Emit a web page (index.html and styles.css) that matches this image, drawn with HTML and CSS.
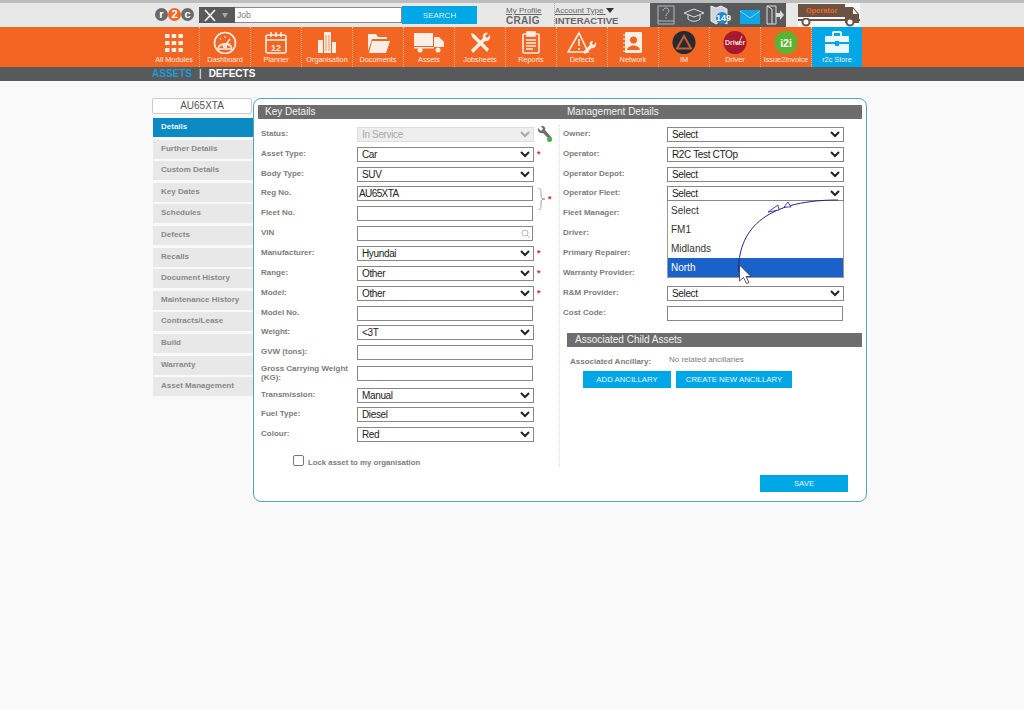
FILE: index.html
```html
<!DOCTYPE html>
<html lang="en">
<head>
  <meta charset="UTF-8">
  <title>r2c - Asset Details</title>
  <link rel="stylesheet" href="styles.css">
</head>
<body>
  <div class="topbar">
    <div class="logo"><span class="ball">r</span><span class="ball ball-mid">2</span><span class="ball">c</span></div>
    <div class="tool-box">
      <svg width="14" height="13" viewBox="0 0 14 13" fill="none" stroke="#eee" stroke-width="1.800"><path d="M2 1l10 11M12 1L2 12"/></svg>
      <span class="caret"></span>
    </div>
    <input class="job-input" type="text" placeholder="Job">
    <button class="search-btn">SEARCH</button>
    <div class="profile">
      <a>My Profile</a>
      <b>CRAIG</b>
    </div>
    <div class="profile account">
      <a>Account Type <span class="caret caret-dark"></span></a>
      <b>INTERACTIVE</b>
    </div>
    <div class="top-icons">
      <svg width="20" height="20" viewBox="0 0 20 20" fill="none" stroke="#ccc" stroke-width="0.800"><rect x="1" y="1" width="16" height="18"/><path d="M1 16h16"/><path d="M6 6c0-4 6-4 6 0 0 2-3 2-3 5M9 12v1.500"/></svg>
      <svg width="22" height="16" viewBox="0 0 22 16" fill="none" stroke="#ddd" stroke-width="1"><path d="M1 6l10-4 10 4-10 4z"/><path d="M5 8v4c3 3 9 3 12 0V8"/></svg>
      <div class="map-icon">
        <svg width="18" height="20" viewBox="0 0 18 20"><path d="M1 1l5 2 5-2 6 3v15l-6-3-5 3-5-3z" fill="#cfd6dc" stroke="#eee"/></svg>
        <span class="badge">149</span>
      </div>
      <svg class="mail-icon" width="20" height="14" viewBox="0 0 20 14"><rect width="20" height="14" fill="#11a5e5"/><path d="M0 1l10 7 10-7" fill="none" stroke="#9fdcf5" stroke-width="0.800"/></svg>
      <svg width="20" height="20" viewBox="0 0 20 20"><path d="M2 1h9v18H2z" fill="none" stroke="#ddd"/><path d="M2 1l5 3v15" fill="none" stroke="#ddd"/><path d="M11 8h4V5l4 5-4 5v-3h-4z" fill="#ddd"/></svg>
    </div>
    <div class="truck">
      <span class="truck-box">Operator</span>
      <svg class="truck-cab" width="15" height="19" viewBox="0 0 15 19"><path d="M0 1h8l6 7v9H0z" fill="#6b5344"/><path d="M8 3h0.500l4 5H8z" fill="#fff"/></svg>
      <svg class="truck-chassis" width="62" height="9" viewBox="0 0 62 9"><rect y="1" width="62" height="2" fill="#6b5344"/><circle cx="8" cy="4" r="3.500" fill="#fff" stroke="#6b5344" stroke-width="2"/><circle cx="52" cy="4" r="3.500" fill="#fff" stroke="#6b5344" stroke-width="2"/></svg>
    </div>
  </div>

  <nav class="mainnav">
    <a class="nav-item">
      <svg width="20" height="24" viewBox="0 0 20 24" fill="#fbeee4"><rect x="1" y="4" width="4.500" height="4"/><rect x="7.700" y="4" width="4.500" height="4"/><rect x="14.500" y="4" width="4.500" height="4"/><rect x="1" y="11" width="4.500" height="4"/><rect x="7.700" y="11" width="4.500" height="4"/><rect x="14.500" y="11" width="4.500" height="4"/><rect x="1" y="18" width="4.500" height="4"/><rect x="7.700" y="18" width="4.500" height="4"/><rect x="14.500" y="18" width="4.500" height="4"/></svg>
      <span>All Modules</span>
    </a>
    <a class="nav-item">
      <svg width="26" height="24" viewBox="0 0 26 24" fill="none" stroke="#fbeee4" stroke-width="1.600"><circle cx="13" cy="13" r="10.500"/><path d="M6 18a8 8 0 0 1 14 0M5.500 19h15"/><path d="M13 16l5-7"/><circle cx="13" cy="16" r="1.500"/><path d="M13 6v2M8 8l1 1.500M18.500 14h-2" stroke-width="1"/></svg>
      <span>Dashboard</span>
    </a>
    <a class="nav-item">
      <svg width="24" height="24" viewBox="0 0 24 24" fill="none" stroke="#fbeee4" stroke-width="1.600"><rect x="2" y="5" width="20" height="18" rx="2"/><path d="M2 10h20M7 2v5M12 2v5M17 2v5"/><text x="12" y="21" text-anchor="middle" font-size="9" font-weight="700" fill="#fbeee4" stroke="none" font-family="Liberation Sans, sans-serif">12</text></svg>
      <span>Planner</span>
    </a>
    <a class="nav-item">
      <svg width="22" height="24" viewBox="0 0 22 24"><path d="M8 2h7v21H8z" fill="#fbeee4"/><path d="M2 10h5v13H2zM16 12h4v11h-4z" fill="#fbeee4"/><path d="M10 5v16M13 5v16" stroke="#f26522" stroke-width="0.700"/></svg>
      <span>Organisation</span>
    </a>
    <a class="nav-item">
      <svg width="24" height="24" viewBox="0 0 24 24" fill="#fbeee4"><path d="M2 21V4h8l2 3h9v2H6z"/><path d="M3 23l3-12h18l-4 12z"/></svg>
      <span>Documents</span>
    </a>
    <a class="nav-item">
      <svg width="30" height="24" viewBox="0 0 30 24" fill="#fbeee4"><rect x="0" y="3" width="19" height="13"/><path d="M20 7h5l5 5v5H20z"/><rect x="0" y="17" width="20" height="1.500"/><circle cx="6" cy="20" r="2.500"/><circle cx="24" cy="20" r="2.500"/></svg>
      <span>Assets</span>
    </a>
    <a class="nav-item">
      <svg width="24" height="24" viewBox="0 0 24 24" fill="#fbeee4"><path d="M3 3l3 1 15 15-2 3L4 7z"/><path d="M22 5l-3 3-2-2 3-3c-3-1-6 1-5 5L3 20l2 3L17 11c3 1 6-2 5-6z"/></svg>
      <span>Jobsheets</span>
    </a>
    <a class="nav-item">
      <svg width="20" height="24" viewBox="0 0 20 24" fill="none" stroke="#fbeee4" stroke-width="1.600"><rect x="2" y="4" width="16" height="19" rx="1"/><rect x="6" y="2" width="8" height="4" fill="#fbeee4"/><path d="M5 10h10M5 13h10M5 16h10M5 19h7"/></svg>
      <span>Reports</span>
    </a>
    <a class="nav-item">
      <svg width="30" height="24" viewBox="0 0 30 24" fill="none" stroke="#fbeee4" stroke-width="1.600"><path d="M12 3L1 22h20z"/><path d="M12 9v7M12 18v2"/><path d="M29 12l-2 3-2-1 1-3c-3 0-4 2-3 4l-7 7 2 2 7-6c2 1 5-2 4-6z" fill="#fbeee4" stroke="none"/></svg>
      <span>Defects</span>
    </a>
    <a class="nav-item">
      <svg width="20" height="24" viewBox="0 0 20 24" fill="#fbeee4"><rect x="2" y="2" width="17" height="21" rx="1"/><circle cx="10.500" cy="10" r="3.500" fill="#f26522"/><path d="M4 20c1-6 12-6 13 0z" fill="#f26522"/><path d="M0 5h3M0 9h3M0 13h3M0 17h3M0 21h3" stroke="#fbeee4"/></svg>
      <span>Network</span>
    </a>
    <a class="nav-item">
      <svg width="24" height="24" viewBox="0 0 24 24"><circle cx="12" cy="12.500" r="11.500" fill="#262a33"/><path d="M12 6l7 12.500H5z" fill="none" stroke="#c9602c" stroke-width="2"/></svg>
      <span>IM</span>
    </a>
    <a class="nav-item">
      <svg width="24" height="24" viewBox="0 0 24 24"><circle cx="12" cy="12.500" r="11.500" fill="#a6192e"/><text x="12" y="15" text-anchor="middle" font-size="7" font-weight="700" fill="#f4dcdc" font-family="Liberation Sans, sans-serif">Driver</text><path d="M13 12l2 3 4-9" fill="none" stroke="#fff" stroke-width="0.700"/></svg>
      <span>Driver</span>
    </a>
    <a class="nav-item">
      <svg width="24" height="24" viewBox="0 0 24 24"><circle cx="12" cy="12.500" r="11.500" fill="#5bb431"/><text x="12" y="16.500" text-anchor="middle" font-size="10.500" font-weight="700" fill="#fff" font-family="Liberation Sans, sans-serif">i2i</text></svg>
      <span>Issue2Invoice</span>
    </a>
    <a class="nav-item nav-store">
      <svg width="26" height="24" viewBox="0 0 26 24" fill="#eaf7fd"><path d="M8 6V3a2 2 0 0 1 2-2h6a2 2 0 0 1 2 2v3h-2V3h-6v3z"/><path d="M1 7a1 1 0 0 1 1-1h22a1 1 0 0 1 1 1v5H15v-1h-4v1H1z"/><path d="M1 14h10v2h4v-2h10v8a1 1 0 0 1-1 1H2a1 1 0 0 1-1-1z"/></svg>
      <span>r2c Store</span>
    </a>
  </nav>

  <div class="subnav">
    <a class="sub-active">ASSETS</a>
    <i>|</i>
    <a>DEFECTS</a>
  </div>

  <main class="content">
    <aside class="sidebar">
      <div class="reg-title">AU65XTA</div>
      <a class="side-link active">Details</a>
      <a class="side-link">Further Details</a>
      <a class="side-link">Custom Details</a>
      <a class="side-link">Key Dates</a>
      <a class="side-link">Schedules</a>
      <a class="side-link">Defects</a>
      <a class="side-link">Recalls</a>
      <a class="side-link">Document History</a>
      <a class="side-link">Maintenance History</a>
      <a class="side-link">Contracts/Lease</a>
      <a class="side-link">Build</a>
      <a class="side-link">Warranty</a>
      <a class="side-link">Asset Management</a>
    </aside>

    <section class="panel">
      <div class="panel-head">
        <span class="head-left">Key Details</span>
        <span>Management Details</span>
      </div>
      <div class="columns">
        <div class="col col-left">
          <div class="row"><label>Status:</label><select class="field" disabled><option>In Service</option></select>
            <svg class="wrench" width="16" height="17" viewBox="0 0 16 17"><path d="M1 2l3 3 2-2-2-3c3-1 5 2 4 4l7 8-2 2-7-7C3 8 0 5 1 2z" fill="#6e6e6e"/><circle cx="12.500" cy="13.500" r="2.500" fill="#4caf50"/></svg>
          </div>
          <div class="row"><label>Asset Type:</label><select class="field"><option>Car</option></select><span class="req">*</span></div>
          <div class="row"><label>Body Type:</label><select class="field"><option>SUV</option></select></div>
          <div class="row"><label>Reg No.</label><input class="field field-text reg-input" type="text" value="AU65XTA">
            <svg class="brace" width="8" height="22" viewBox="0 0 8 22" fill="none" stroke="#888" stroke-width="0.800"><path d="M0 0c3 0 3 2 3 4v4c0 2 1 3 4 3-3 0-4 1-4 3v4c0 2 0 4-3 4"/></svg>
            <span class="req req-brace">*</span>
          </div>
          <div class="row"><label>Fleet No.</label><input class="field field-text" type="text"></div>
          <div class="row"><label>VIN</label>
            <div class="vin-wrap">
              <input class="field field-text" type="text">
              <svg class="vin-search" width="10" height="10" viewBox="0 0 10 10" fill="none" stroke="#bbb"><circle cx="4" cy="4" r="3"/><path d="M6 6l3 3"/></svg>
            </div>
          </div>
          <div class="row"><label>Manufacturer:</label><select class="field"><option>Hyundai</option></select><span class="req">*</span></div>
          <div class="row"><label>Range:</label><select class="field"><option>Other</option></select><span class="req">*</span></div>
          <div class="row"><label>Model:</label><select class="field"><option>Other</option></select><span class="req">*</span></div>
          <div class="row"><label>Model No.</label><input class="field field-text" type="text"></div>
          <div class="row"><label>Weight:</label><select class="field"><option>&lt;3T</option></select></div>
          <div class="row"><label>GVW (tons):</label><input class="field field-text" type="text"></div>
          <div class="row row-tall"><label>Gross Carrying Weight (KG):</label><input class="field field-text" type="text"></div>
          <div class="row"><label>Transmission:</label><select class="field"><option>Manual</option></select></div>
          <div class="row"><label>Fuel Type:</label><select class="field"><option>Diesel</option></select></div>
          <div class="row"><label>Colour:</label><select class="field"><option>Red</option></select></div>
          <div class="lock-row"><span class="check"></span><span class="lock-text">Lock asset to my organisation</span></div>
        </div>

        <div class="col col-right">
          <div class="row"><label>Owner:</label><select class="field"><option>Select</option></select></div>
          <div class="row"><label>Operator:</label><select class="field"><option>R2C Test CTOp</option></select></div>
          <div class="row"><label>Operator Depot:</label><select class="field"><option>Select</option></select></div>
          <div class="row"><label>Operator Fleet:</label>
            <div class="open-select">
              <select class="field"><option>Select</option></select>
              <ul class="dropdown">
                <li>Select</li>
                <li>FM1</li>
                <li>Midlands</li>
                <li class="picked">North</li>
              </ul>
            </div>
          </div>
          <div class="row"><label>Fleet Manager:</label></div>
          <div class="row"><label>Driver:</label></div>
          <div class="row"><label>Primary Repairer:</label></div>
          <div class="row"><label>Warranty Provider:</label></div>
          <div class="row"><label>R&amp;M Provider:</label><select class="field"><option>Select</option></select></div>
          <div class="row"><label>Cost Code:</label><input class="field field-text" type="text"></div>

          <div class="child-head">Associated Child Assets</div>
          <div class="ancillary">
            <label>Associated Ancillary:</label>
            <span>No related ancillaries</span>
          </div>
          <div class="ancillary-btns">
            <button class="blue-btn btn-add">ADD ANCILLARY</button>
            <button class="blue-btn btn-new">CREATE NEW ANCILLARY</button>
          </div>
        </div>
      </div>
      <div class="panel-foot"><button class="blue-btn btn-save">SAVE</button></div>
    </section>
  </main>

  <!-- annotation drawn over the screenshot -->
  <svg class="scribble" width="1024" height="709" viewBox="0 0 1024 709">
    <path d="M738.500 272C738 232 762 200 838 200" fill="none" stroke="#23238f" stroke-width="1"/>
    <path d="M768 212l10-7 1 5zM784 207l4-5 3 5z" fill="#fff" stroke="#23238f" stroke-width="0.800"/>
    <path d="M739.500 265v16l4-3.500 3 6 2.500-1-3-6h5z" fill="#fff" stroke="#333" stroke-width="0.800"/>
  </svg>
</body>
</html>
```

FILE: styles.css
```css
* {
  box-sizing: border-box;
}

body {
  margin: 0;
  background-color: #f9f9f9;
  font-family: "Liberation Sans", Arial, sans-serif;
  height: 709px;
  overflow: hidden;
  position: relative;
}

/* top bar */
.topbar {
  height: 27px;
  border-top: 3px solid #bdbdbd;
  background-color: #e8e8e8;
  display: flex;
  align-items: flex-start;
  padding-left: 155px;
}

.logo {
  display: flex;
  margin-top: 5px;
  margin-right: 6px;
  width: 38px;
}

.ball {
  width: 13px;
  height: 13px;
  flex: none;
  border-radius: 50%;
  background-color: #6a6a6a;
  color: white;
  font-size: 11px;
  font-weight: bold;
  line-height: 12px;
  text-align: center;
}

.ball-mid {
  background-color: #f26522;
}

.tool-box {
  width: 36px;
  height: 16px;
  margin-top: 4px;
  background-color: #58595b;
  display: flex;
  align-items: center;
  padding-left: 4px;
  gap: 5px;
}

.caret {
  display: inline-block;
  border-left: 3.5px solid transparent;
  border-right: 3.5px solid transparent;
  border-top: 5px solid #aaa;
}

.caret-dark {
  border-top-color: #333;
  border-left-width: 4px;
  border-right-width: 4px;
}

.job-input {
  width: 167px;
  height: 16px;
  margin-top: 4px;
  border: 1px solid #888;
  border-left: none;
  background: white;
  padding: 0 2px;
  font-family: inherit;
  font-size: 8.5px;
  outline: none;
}

.job-input::placeholder {
  color: #777;
}

.search-btn {
  width: 75px;
  height: 18px;
  margin-top: 3px;
  border: none;
  background-color: #00a7e7;
  color: #dff4fd;
  font-family: inherit;
  font-size: 8px;
  padding: 0;
}

.profile {
  margin-left: 29px;
  width: 40px;
  color: #666;
  display: flex;
  flex-direction: column;
  padding-top: 3px;
}

.profile a {
  font-size: 8px;
  line-height: 9px;
  text-decoration: underline;
  white-space: nowrap;
}

.profile b {
  font-size: 10px;
  line-height: 11px;
  letter-spacing: 0.3px;
  white-space: nowrap;
}

.account {
  margin-left: 8px;
  width: 96px;
  border-left: 1px dotted #aaa;
}

.account b {
  font-size: 9.5px;
  letter-spacing: 0;
}

.top-icons {
  width: 136px;
  height: 24px;
  background-color: #58595b;
  display: flex;
  align-items: center;
  justify-content: space-between;
  padding: 0 1px 0 7px;
}

.map-icon {
  position: relative;
  width: 24px;
  height: 20px;
}

.badge {
  position: absolute;
  left: 6px;
  top: 7px;
  width: 12px;
  height: 12px;
  border-radius: 50%;
  background-color: #1e88d0;
  color: white;
  font-size: 9px;
  font-weight: bold;
  line-height: 12px;
  white-space: nowrap;
}

.mail-icon {
  margin-top: 3px;
}

.truck {
  position: relative;
  width: 62px;
  height: 24px;
  margin-left: 12px;
  background-color: #f8f8f8;
}

.truck-box {
  position: absolute;
  left: 0;
  top: 1px;
  width: 47px;
  height: 13px;
  background-color: #6b5344;
  color: #f26522;
  font-size: 7.5px;
  font-weight: bold;
  line-height: 13px;
  text-align: center;
}

.truck-cab {
  position: absolute;
  right: 0;
  top: 3px;
}

.truck-chassis {
  position: absolute;
  left: 0;
  bottom: 0;
}

/* main orange nav */
.mainnav {
  height: 40px;
  background-color: #f26522;
  display: flex;
  padding-left: 149px;
}

.nav-item {
  width: 51px;
  height: 40px;
  flex: none;
  border-right: 1px dotted #f9b48a;
  color: #fbeee4;
  font-size: 7.3px;
  display: flex;
  flex-direction: column;
  align-items: center;
  padding-top: 3px;
  white-space: nowrap;
}

.nav-item svg {
  height: 24px;
  flex: none;
}

.nav-item span {
  margin-top: 0.5px;
  line-height: 9px;
}

.nav-store {
  width: 50px;
  background-color: #00a7e7;
  border-right: none;
}

.subnav {
  height: 14px;
  background-color: #58595b;
  padding-left: 152px;
  color: white;
  font-size: 10px;
  font-weight: bold;
  line-height: 13px;
  display: flex;
  gap: 7px;
}

.subnav i {
  font-style: normal;
  font-weight: normal;
}

.sub-active {
  color: #1f9bd7;
}

/* page content */
.content {
  display: flex;
  margin-top: 17px;
  padding-left: 152px;
}

.sidebar {
  width: 101px;
  flex: none;
  display: flex;
  flex-direction: column;
}

.reg-title {
  height: 16px;
  width: 100px;
  border: 1px solid #ccc;
  border-radius: 2px;
  background-color: white;
  color: #555;
  font-size: 10px;
  line-height: 14px;
  text-align: center;
  margin-bottom: 4px;
}

.side-link {
  height: 19px;
  margin-left: 1px;
  margin-bottom: 2.6px;
  padding-left: 8px;
  background-color: #e8e8e8;
  color: #888;
  font-size: 8px;
  font-weight: bold;
  line-height: 18px;
}

.side-link.active {
  background-color: #0b8ac4;
  color: #e8f6fc;
}

.panel {
  width: 614px;
  height: 404px;
  border: 1.5px solid #53a4bd;
  border-radius: 8px;
  background-color: white;
  padding: 5.5px 4px 0 4px;
  display: flex;
  flex-direction: column;
}

.panel-head {
  height: 14px;
  background-color: #6d6d6d;
  color: #f2f2f2;
  font-size: 10px;
  line-height: 14px;
  display: flex;
  flex: none;
}

.head-left {
  width: 309px;
  padding-left: 7px;
}

.columns {
  display: flex;
  margin-top: 6px;
  height: 342px;
}

.col-left {
  width: 301px;
  padding-left: 3px;
}

.col-right {
  flex: 1;
  border-left: 1px dotted #ddd;
  padding-left: 3px;
}

.row {
  height: 19.85px;
  display: flex;
  align-items: center;
  position: relative;
}

.row-tall {
  height: 22.5px;
}

.row label {
  width: 96px;
  flex: none;
  margin-top: -2px;
  color: #7c7c7c;
  font-size: 8px;
  font-weight: bold;
  line-height: 9px;
}

.col-right .row label {
  width: 104px;
}

.field {
  width: 177px;
  height: 15px;
  border: 1px solid #888;
  background-color: white;
  color: #222;
  font-family: inherit;
  font-size: 10px;
  letter-spacing: -0.35px;
  padding: 0;
  border-radius: 0;
  outline: none;
}

.field-text {
  width: 176px;
}

.reg-input {
  padding-left: 1px;
  letter-spacing: -0.6px;
}

.field:disabled {
  background-color: #eee;
  border-color: #ddd;
  color: #aaa;
  opacity: 1;
}

.req {
  color: #d9262e;
  font-size: 9px;
  font-weight: bold;
  margin-left: 3px;
}

.req-brace {
  position: absolute;
  left: 287px;
  top: 10px;
  margin: 0;
}

.brace {
  position: absolute;
  left: 277px;
  top: 4px;
}

.wrench {
  margin-left: 3px;
}

.vin-wrap {
  position: relative;
  display: flex;
}

.vin-search {
  position: absolute;
  right: 2px;
  top: 3px;
}

.lock-row {
  display: flex;
  align-items: center;
  margin: 9px 0 0 32px;
  color: #7c7c7c;
  font-size: 7.8px;
  font-weight: bold;
}

.lock-text {
  padding-top: 4px;
}

.check {
  width: 11px;
  height: 11px;
  margin-right: 4px;
  border: 1px solid #777;
  border-radius: 2px;
  background-color: white;
}

.open-select {
  position: relative;
  display: flex;
}

.dropdown {
  position: absolute;
  left: 0;
  top: 15px;
  width: 177px;
  height: 77px;
  margin: 0;
  padding: 0;
  list-style: none;
  background-color: white;
  border: 1px solid #999;
  border-top: none;
  color: #333;
  font-size: 10px;
  z-index: 2;
}

.dropdown li {
  height: 19px;
  line-height: 19px;
  padding-left: 3px;
}

.dropdown li.picked {
  background-color: #1a62c9;
  color: white;
}

.child-head {
  height: 14px;
  margin: 10px 0 0 4px;
  background-color: #6d6d6d;
  color: #f2f2f2;
  font-size: 10px;
  line-height: 14px;
  padding-left: 8px;
}

.ancillary {
  display: flex;
  margin: 8px 0 0 7px;
  height: 16px;
  color: #7c7c7c;
  font-size: 8px;
}

.ancillary label {
  width: 99px;
  font-weight: bold;
  padding-top: 2px;
}

.ancillary-btns {
  display: flex;
  gap: 5px;
  margin-left: 20px;
}

.blue-btn {
  height: 17px;
  border: none;
  padding: 0;
  background-color: #00a7e7;
  color: #e8f8fe;
  font-family: inherit;
  font-size: 7.8px;
}

.btn-add,
.btn-save {
  width: 88px;
}

.btn-new {
  width: 116px;
}

.panel-foot {
  display: flex;
  justify-content: flex-end;
  padding-right: 14px;
  margin-top: 8px;
}

.scribble {
  position: absolute;
  left: 0;
  top: 0;
  pointer-events: none;
  z-index: 5;
}
```
